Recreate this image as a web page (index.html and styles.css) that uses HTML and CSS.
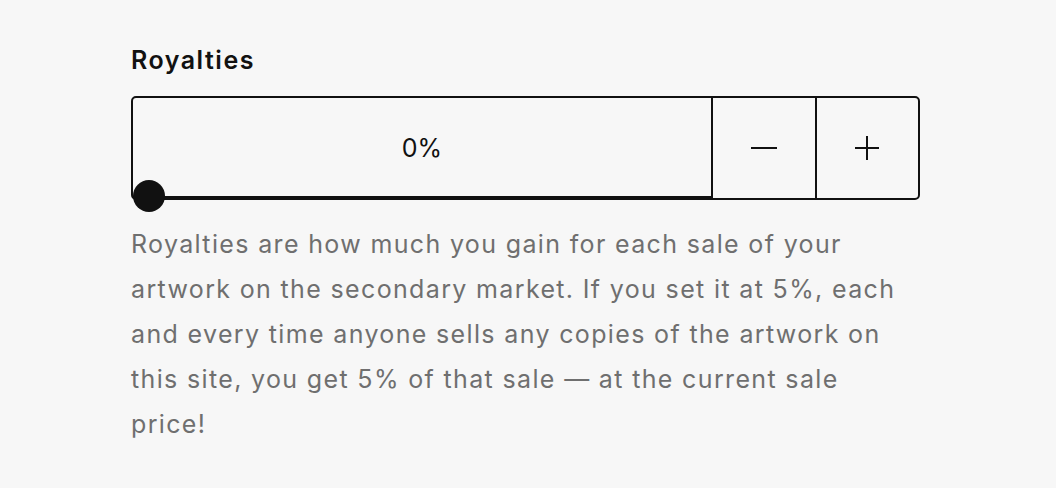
FILE: index.html
```html
<!DOCTYPE html>
<html lang="en">
<head>
    <meta charset="UTF-8">
    <title>Royalties</title>
    <link rel="stylesheet" href="styles.css">
</head>
<body>
    <div class="field">
        <label class="field-label" for="royalties">Royalties</label>
        <div class="stepper">
            <div class="stepper-value">
                <span id="royalties">0%</span>
                <span class="thumb"></span>
            </div>
            <button class="stepper-btn" aria-label="Decrease">
                <svg width="28" height="28" viewBox="0 0 28 28"><path d="M1 14h26" stroke="#111" stroke-width="2"/></svg>
            </button>
            <button class="stepper-btn" aria-label="Increase">
                <svg width="28" height="28" viewBox="0 0 28 28"><path d="M2 14h24M14 2v24" stroke="#111" stroke-width="2"/></svg>
            </button>
        </div>
        <p class="field-help">Royalties are how much you gain for each sale of your artwork on the secondary market. If you set it at 5%, each and every time anyone sells any copies of the artwork on this site, you get 5% of that sale — at the current sale price!</p>
    </div>
</body>
</html>
```

FILE: styles.css
```css
body {
    margin: 0;
    background-color: #f7f7f7;
    font-family: Inter, "Noto Sans", sans-serif;
    color: #111;
}

.field {
    width: 789px;
    padding: 44px 0 0 131px;
}

.field-label {
    display: block;
    font-size: 25px;
    font-weight: 600;
    letter-spacing: 1.5px;
    line-height: 32px;
    margin-bottom: 20px;
}

.stepper {
    display: flex;
    height: 100px;
    border: 2px solid #111;
    border-radius: 5px;
}

.stepper-value {
    position: relative;
    flex: 1;
    display: flex;
    align-items: center;
    justify-content: center;
    padding-top: 2px;
    font-size: 25px;
    border-bottom: 2px solid #111;
}

.thumb {
    position: absolute;
    left: 0;
    bottom: -16px;
    width: 32px;
    height: 32px;
    border-radius: 50%;
    background-color: #111;
}

.stepper-btn {
    box-sizing: border-box;
    width: 103.5px;
    display: flex;
    align-items: center;
    justify-content: center;
    background: none;
    border: none;
    border-left: 2px solid #111;
    padding: 0;
    cursor: pointer;
}

.field-help {
    margin: 22px 0 0;
    font-size: 25px;
    letter-spacing: 1.35px;
    line-height: 45px;
    color: #6f6f6f;
}
```
